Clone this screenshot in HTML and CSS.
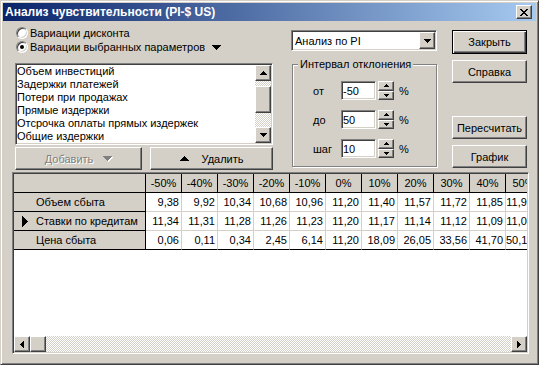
FILE: index.html
```html
<!DOCTYPE html>
<html lang="ru">
<head>
  <meta charset="UTF-8">
  <title>Анализ чувствительности</title>
  <link rel="stylesheet" href="styles.css">
</head>
<body>
  <div class="window">
    <div class="titlebar">
      <span class="title">Анализ чувствительности (PI-$ US)</span>
      <button class="close-btn raised">
        <svg width="8" height="7" viewBox="0 0 8 7"><path d="M0 0h2v1H0zM6 0h2v1H6zM1 1h2v1H1zM5 1h2v1H5zM2 2h4v1H2zM3 3h2v1H3zM2 4h4v1H2zM1 5h2v1H1zM5 5h2v1H5zM0 6h2v1H0zM6 6h2v1H6z"/></svg>
      </button>
    </div>

    <div class="top">
      <div class="left-panel">
        <label class="radio"><span class="radio-box"></span>Вариации дисконта</label>
        <label class="radio">
          <span class="radio-box checked"></span>Вариации выбранных параметров
          <svg class="tri-after" width="9" height="5" viewBox="0 0 9 5"><path d="M0 0h9v1H0zM1 1h7v1H1zM2 2h5v1H2zM3 3h3v1H3zM4 4h1v1H4z"/></svg>
        </label>

        <div class="listbox sunken">
          <ul class="items">
            <li>Объем инвестиций</li>
            <li>Задержки платежей</li>
            <li>Потери при продажах</li>
            <li>Прямые издержки</li>
            <li>Отсрочка оплаты прямых издержек</li>
            <li>Общие издержки</li>
          </ul>
          <div class="vscroll dither">
            <span class="arrow-btn raised"><svg width="7" height="4" viewBox="0 0 7 4"><path d="M3 0h1v1H3zM2 1h3v1H2zM1 2h5v1H1zM0 3h7v1H0z"/></svg></span>
            <span class="vthumb raised"></span>
            <span class="arrow-btn raised end"><svg width="7" height="4" viewBox="0 0 7 4"><path d="M0 0h7v1H0zM1 1h5v1H1zM2 2h3v1H2zM3 3h1v1H3z"/></svg></span>
          </div>
        </div>

        <div class="list-buttons">
          <button class="btn raised btn-add disabled">
            <span>Добавить</span>
            <svg width="9" height="5" viewBox="0 0 9 5"><path d="M0 0h9v1H0zM1 1h7v1H1zM2 2h5v1H2zM3 3h3v1H3zM4 4h1v1H4z"/></svg>
          </button>
          <button class="btn raised btn-del">
            <svg width="9" height="5" viewBox="0 0 9 5"><path d="M4 0h1v1H4zM3 1h3v1H3zM2 2h5v1H2zM1 3h7v1H1zM0 4h9v1H0z"/></svg>
            <span>Удалить</span>
          </button>
        </div>
      </div>

      <div class="middle-panel">
        <div class="combo sunken">
          <span class="combo-value">Анализ по PI</span>
          <span class="combo-btn raised"><svg width="7" height="4" viewBox="0 0 7 4"><path d="M0 0h7v1H0zM1 1h5v1H1zM2 2h3v1H2zM3 3h1v1H3z"/></svg></span>
        </div>

        <fieldset class="group">
          <legend>Интервал отклонения</legend>
          <div class="spin-row">
            <span class="spin-label">от</span>
            <input class="spin-input sunken" type="text" value="-50">
            <span class="spin">
              <span class="spin-half raised"><svg width="5" height="3" viewBox="0 0 5 3"><path d="M2 0h1v1H2zM1 1h3v1H1zM0 2h5v1H0z"/></svg></span>
              <span class="spin-half raised"><svg width="5" height="3" viewBox="0 0 5 3"><path d="M0 0h5v1H0zM1 1h3v1H1zM2 2h1v1H2z"/></svg></span>
            </span>
            <span class="pct">%</span>
          </div>
          <div class="spin-row">
            <span class="spin-label">до</span>
            <input class="spin-input sunken" type="text" value="50">
            <span class="spin">
              <span class="spin-half raised"><svg width="5" height="3" viewBox="0 0 5 3"><path d="M2 0h1v1H2zM1 1h3v1H1zM0 2h5v1H0z"/></svg></span>
              <span class="spin-half raised"><svg width="5" height="3" viewBox="0 0 5 3"><path d="M0 0h5v1H0zM1 1h3v1H1zM2 2h1v1H2z"/></svg></span>
            </span>
            <span class="pct">%</span>
          </div>
          <div class="spin-row">
            <span class="spin-label">шаг</span>
            <input class="spin-input sunken" type="text" value="10">
            <span class="spin">
              <span class="spin-half raised"><svg width="5" height="3" viewBox="0 0 5 3"><path d="M2 0h1v1H2zM1 1h3v1H1zM0 2h5v1H0z"/></svg></span>
              <span class="spin-half raised"><svg width="5" height="3" viewBox="0 0 5 3"><path d="M0 0h5v1H0zM1 1h3v1H1zM2 2h1v1H2z"/></svg></span>
            </span>
            <span class="pct">%</span>
          </div>
        </fieldset>
      </div>

      <div class="right-panel">
        <button class="btn btn-default">Закрыть</button>
        <button class="btn raised btn-help">Справка</button>
        <button class="btn raised btn-recalc">Пересчитать</button>
        <button class="btn raised btn-chart">График</button>
      </div>
    </div>

    <div class="grid-box sunken">
      <div class="grid-view">
        <div class="grid">
          <div class="cell fixed"></div>
          <div class="cell fixed head">-50%</div>
          <div class="cell fixed head">-40%</div>
          <div class="cell fixed head">-30%</div>
          <div class="cell fixed head">-20%</div>
          <div class="cell fixed head">-10%</div>
          <div class="cell fixed head">0%</div>
          <div class="cell fixed head">10%</div>
          <div class="cell fixed head">20%</div>
          <div class="cell fixed head">30%</div>
          <div class="cell fixed head">40%</div>
          <div class="cell fixed head">50%</div>

          <div class="cell fixed row-head">Объем сбыта</div>
          <div class="cell">9,38</div>
          <div class="cell">9,92</div>
          <div class="cell">10,34</div>
          <div class="cell">10,68</div>
          <div class="cell">10,96</div>
          <div class="cell">11,20</div>
          <div class="cell">11,40</div>
          <div class="cell">11,57</div>
          <div class="cell">11,72</div>
          <div class="cell">11,85</div>
          <div class="cell cut">11,97</div>

          <div class="cell fixed row-head current">
            <svg class="row-mark" width="6" height="11" viewBox="0 0 6 11"><path d="M0 0h1v11H0zM1 1h1v9H1zM2 2h1v7H2zM3 3h1v5H3zM4 4h1v3H4zM5 5h1v1H5z"/></svg>
            Ставки по кредитам
          </div>
          <div class="cell">11,34</div>
          <div class="cell">11,31</div>
          <div class="cell">11,28</div>
          <div class="cell">11,26</div>
          <div class="cell">11,23</div>
          <div class="cell">11,20</div>
          <div class="cell">11,17</div>
          <div class="cell">11,14</div>
          <div class="cell">11,12</div>
          <div class="cell">11,09</div>
          <div class="cell cut">11,06</div>

          <div class="cell fixed row-head last">Цена сбыта</div>
          <div class="cell last">0,06</div>
          <div class="cell last">0,11</div>
          <div class="cell last">0,34</div>
          <div class="cell last">2,45</div>
          <div class="cell last">6,14</div>
          <div class="cell last">11,20</div>
          <div class="cell last">18,09</div>
          <div class="cell last">26,05</div>
          <div class="cell last">33,56</div>
          <div class="cell last">41,70</div>
          <div class="cell last cut">50,12</div>
        </div>
      </div>

      <div class="hscroll dither">
        <span class="arrow-btn raised"><svg width="4" height="7" viewBox="0 0 4 7"><path d="M3 0h1v7H3zM2 1h1v5H2zM1 2h1v3H1zM0 3h1v1H0z"/></svg></span>
        <span class="hthumb raised"></span>
        <span class="arrow-btn raised end"><svg width="4" height="7" viewBox="0 0 4 7"><path d="M0 0h1v7H0zM1 1h1v5H1zM2 2h1v3H2zM3 3h1v1H3z"/></svg></span>
      </div>
    </div>
  </div>
</body>
</html>
```

FILE: styles.css
```css
* { box-sizing: border-box; }

body {
  margin: 0;
  background: #d4d0c8;
  font-family: "Liberation Sans", Arial, sans-serif;
  font-size: 11px;
  color: #000;
}

svg { display: block; }

/* classic 3d edges */
.raised {
  background: #d4d0c8;
  border: 1px solid;
  border-color: #fff #404040 #404040 #fff;
  box-shadow: inset -1px -1px #808080;
}
.sunken {
  background: #fff;
  border: 1px solid;
  border-color: #808080 #fff #fff #808080;
  box-shadow: inset 1px 1px #404040, inset -1px -1px #d4d0c8;
}
.dither {
  background: repeating-conic-gradient(#d4d0c8 0 25%, #fff 0 50%) 0 0 / 2px 2px;
}

.window {
  width: 539px;
  height: 365px;
  padding: 2px;
  background: #d4d0c8;
  border: 1px solid;
  border-color: #d4d0c8 #404040 #404040 #d4d0c8;
  box-shadow: inset 1px 1px #fff, inset -1px -1px #808080;
}

.titlebar {
  height: 18px;
  display: flex;
  align-items: center;
  justify-content: space-between;
  padding: 0 4px 0 2px;
  background: linear-gradient(to right, #0a246a, #a6caf0);
}
.title { color: #fff; font-weight: bold; font-size: 12px; }
.close-btn {
  width: 16px;
  height: 14px;
  padding: 0;
  display: flex;
  align-items: center;
  justify-content: center;
}

.top { display: flex; height: 151px; }

/* left part */
.left-panel { width: 258px; margin-left: 12px; padding-top: 5px; }
.radio { display: flex; align-items: center; height: 14px; gap: 2px; }
.radio-box {
  width: 12px;
  height: 12px;
  margin-left: 1px;
  border-radius: 50%;
  background: #fff;
  border: 1px solid;
  border-color: #808080 #fff #fff #808080;
  box-shadow: inset 1px 1px #404040, inset -1px -1px #d4d0c8;
  display: flex;
  align-items: center;
  justify-content: center;
}
.radio-box.checked::after {
  content: "";
  width: 4px;
  height: 4px;
  border-radius: 50%;
  background: #000;
}
.tri-after { margin-left: 5px; }

.listbox { margin-top: 9px; height: 82px; padding: 1px; display: flex; }
.items { flex: 1; margin: 0; padding: 0; list-style: none; }
.items li { height: 13px; line-height: 13px; white-space: nowrap; }

.vscroll { width: 16px; display: flex; flex-direction: column; }
.arrow-btn {
  width: 16px;
  height: 16px;
  flex: none;
  display: flex;
  align-items: center;
  justify-content: center;
}
.vscroll .end { margin-top: auto; }
.vthumb { height: 27px; margin-top: 5px; }

.list-buttons { display: flex; justify-content: space-between; margin-top: 2px; }
.btn {
  height: 23px;
  padding: 0;
  font: inherit;
  color: #000;
}
.btn-add, .btn-del { display: flex; align-items: center; justify-content: center; }
.btn-add { width: 127px; gap: 10px; }
.btn-del { width: 123px; gap: 13px; }
.disabled { color: #808080; text-shadow: 1px 1px #fff; }
.disabled svg { fill: #808080; filter: drop-shadow(1px 1px 0 #fff); }

/* middle part */
.middle-panel { width: 146px; margin-left: 18px; padding-top: 9px; }
.combo { height: 21px; padding: 1px; display: flex; align-items: center; }
.combo-value { flex: 1; padding-left: 2px; }
.combo-btn {
  width: 16px;
  height: 17px;
  display: flex;
  align-items: center;
  justify-content: center;
}

.group {
  min-width: 0;
  height: 109px;
  margin: 7px 0 0 1px;
  padding: 11px 0 0 0;
  border: 1px solid #808080;
  box-shadow: inset 1px 1px #fff, 1px 1px #fff;
}
.group legend { margin-left: 5px; padding: 0 2px; background: #d4d0c8; }

.spin-row { display: flex; align-items: center; height: 19px; margin-bottom: 10px; padding-left: 20px; }
.spin-label { width: 28px; }
.spin-input {
  width: 35px;
  height: 19px;
  padding: 0 1px;
  font: inherit;
  color: #000;
  outline: none;
}
.spin { width: 16px; height: 19px; margin-left: 2px; display: flex; flex-direction: column; }
.spin-half { flex: 1; display: flex; align-items: center; justify-content: center; }
.pct { margin-left: 5px; }

/* right part */
.right-panel { width: 75px; margin-left: 15px; padding-top: 9px; display: flex; flex-direction: column; }
.btn-default {
  height: 24px;
  background: #d4d0c8;
  border: 1px solid #000;
  box-shadow: inset 1px 1px #fff, inset -1px -1px #404040, inset -2px -2px #808080;
}
.btn-help { margin-top: 6px; }
.btn-recalc { margin-top: 33px; }
.btn-chart { margin-top: 6px; }

/* grid */
.grid-box {
  width: 517px;
  height: 182px;
  margin-left: 9px;
  padding: 1px;
  display: flex;
  flex-direction: column;
}
.grid-view { flex: 1; overflow: hidden; }
.grid {
  display: grid;
  grid-template-columns: 132px repeat(11, 36px);
  grid-auto-rows: 19px;
  width: max-content;
}
.cell {
  padding-right: 2px;
  line-height: 18px;
  text-align: right;
  white-space: nowrap;
  border-right: 1px solid #d4d0c8;
  border-bottom: 1px solid #d4d0c8;
}
.cell.cut { padding-right: 8px; }
.cell.last { border-bottom-color: #000; }
.fixed { background: #d4d0c8; border-color: #000; }
.head { text-align: center; padding: 0; }
.row-head { display: flex; align-items: center; padding-left: 22px; text-align: left; }
.row-head.current { padding-left: 8px; }
.row-mark { margin-right: 8px; }

.hscroll { height: 16px; display: flex; }
.hthumb { width: 16px; }
.hscroll .end { margin-left: auto; }
```
